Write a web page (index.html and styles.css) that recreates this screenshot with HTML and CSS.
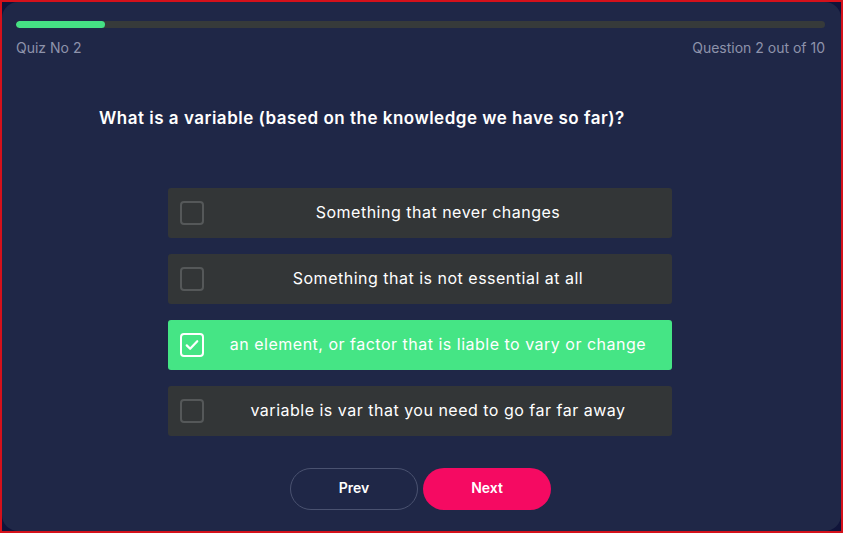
FILE: index.html
```html
<!DOCTYPE html>
<html>
<head>
<meta charset="utf-8">
<link rel="stylesheet" href="styles.css">
</head>
<body>
<div class="frame">
  <div class="card">
    <div class="progress"><div class="fill" style="width: 11%"></div></div>
    <div class="meta">
      <span>Quiz No 2</span>
      <span>Question 2 out of 10</span>
    </div>
    <h1 class="question">What is a variable (based on the knowledge we have so far)?</h1>
    <div class="options">
      <div class="option">
        <span class="check"></span>
        <span class="label">Something that never changes</span>
      </div>
      <div class="option">
        <span class="check"></span>
        <span class="label">Something that is not essential at all</span>
      </div>
      <div class="option selected">
        <span class="check"><svg viewBox="0 0 24 24" width="18" height="18"><path d="M5 12.5l4.5 4.5L19 7" fill="none" stroke="#fff" stroke-width="3" stroke-linecap="round" stroke-linejoin="round"/></svg></span>
        <span class="label">an element, or factor that is liable to vary or change</span>
      </div>
      <div class="option">
        <span class="check"></span>
        <span class="label">variable is var that you need to go far far away</span>
      </div>
    </div>
    <div class="buttons">
      <button class="btn prev">Prev</button>
      <button class="btn next">Next</button>
    </div>
  </div>
</div>
</body>
</html>
```
FILE: styles.css
```css
* { box-sizing: border-box; }
html, body { margin: 0; padding: 0; }
body {
  width: 843px;
  height: 533px;
  font-family: "Inter", "Open Sans", sans-serif;
  background: #12163a;
}
.frame {
  width: 843px;
  height: 533px;
  border: 2px solid #d4111b;
  background: #10143a;
}
.card {
  height: 100%;
  background: #1f2747;
  border-radius: 16px;
  padding: 19px 16px 0 14px;
  display: flex;
  flex-direction: column;
}
.progress {
  height: 7px;
  border-radius: 4px;
  background: #363a3a;
  overflow: hidden;
}
.fill {
  height: 100%;
  background: #45e184;
  border-radius: 4px;
}
.meta {
  display: flex;
  justify-content: space-between;
  margin-top: 11px;
  font-size: 14px;
  color: #8e93ab;
  letter-spacing: 0;
}
.question {
  margin: 52px 0 0 83px;
  font-size: 17px;
  font-weight: 600;
  color: #ffffff;
  letter-spacing: 0.5px;
}
.options {
  margin: 60px 0 0 152px;
  width: 504px;
  display: flex;
  flex-direction: column;
  gap: 16px;
}
.option {
  height: 50px;
  background: #333637;
  border-radius: 3px;
  display: flex;
  align-items: center;
  padding-left: 12px;
}
.check {
  width: 24px;
  height: 24px;
  flex: none;
  border: 2px solid #555859;
  border-radius: 4px;
  display: flex;
  align-items: center;
  justify-content: center;
}
.label {
  flex: 1;
  text-align: center;
  color: #ffffff;
  font-size: 16px;
  font-weight: 400;
  letter-spacing: 0.5px;
  padding-bottom: 3px;
}
.option.selected { background: #45e585; }
.option.selected .check { border-color: #ffffff; }
.buttons {
  margin: 32px 0 0 274px;
  display: flex;
  gap: 5px;
}
.btn {
  width: 128px;
  height: 42px;
  border-radius: 21px;
  font-family: inherit;
  font-size: 14px;
  font-weight: 600;
  color: #ffffff;
  padding: 0 0 3px;
  cursor: pointer;
}
.prev {
  background: transparent;
  border: 1px solid #4a5270;
}
.next {
  background: #f50a62;
  border: none;
}
```
